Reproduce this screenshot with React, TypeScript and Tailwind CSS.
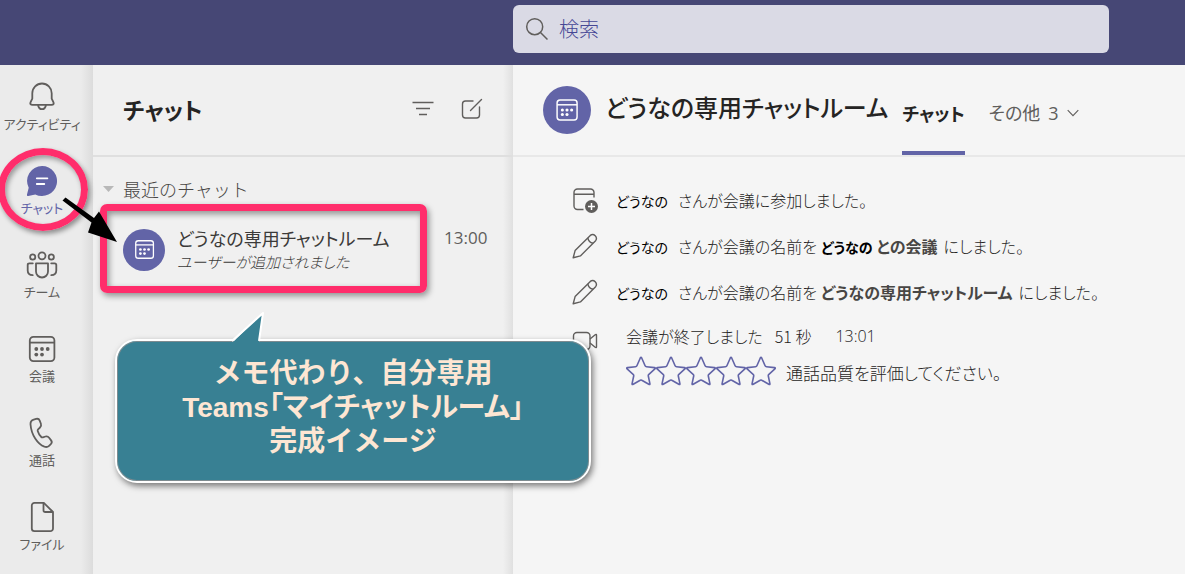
import type { ReactNode } from 'react';

function CalendarIcon({ className }: { className: string }) {
  return (
    <svg viewBox="0 0 32 32" className={className} fill="none" stroke="currentColor" strokeWidth="1.8" aria-hidden="true">
      <rect x="3.8" y="3.8" width="24.6" height="24.4" rx="3.6" />
      <path d="M3.8 9.6h24.6" />
      <g fill="currentColor" stroke="none">
        <circle cx="10.3" cy="16" r="1.9" />
        <circle cx="16" cy="16" r="1.9" />
        <circle cx="21.7" cy="16" r="1.9" />
        <circle cx="10.3" cy="21.6" r="1.9" />
        <circle cx="16" cy="21.6" r="1.9" />
      </g>
    </svg>
  );
}

function BellIcon() {
  return (
    <svg viewBox="0 0 32 32" className="size-8" fill="none" stroke="currentColor" strokeWidth="1.8" strokeLinejoin="round" aria-hidden="true">
      <path d="M6.5 23.8c-2 0-2.6-1-2-2.4l1.8-3.8v-5.4a9.7 9.7 0 0 1 19.4 0v5.4l1.8 3.8c.6 1.4 0 2.4-2 2.4z" />
      <path d="M12 24c.5 2.7 2 4.2 4 4.2s3.500-1.500 4-4.2" />
    </svg>
  );
}

function ChatIcon() {
  return (
    <svg viewBox="0 0 32 32" className="size-8" aria-hidden="true">
      <path fill="currentColor" d="M16 1a15 15 0 1 1-6.7 28.4L2.3 31c-1 .2-1.500-.5-1.300-1.400l1.700-6.800A15 15 0 0 1 16 1z" />
      <path d="M10.8 13.3h10.6M10.8 19h7.5" stroke="#fff" strokeWidth="1.8" strokeLinecap="round" />
    </svg>
  );
}

function TeamIcon() {
  return (
    <svg viewBox="0 0 32 32" className="size-8" fill="none" stroke="currentColor" strokeWidth="1.8" strokeLinecap="round" aria-hidden="true">
      <circle cx="16" cy="6.800" r="3.500" />
      <circle cx="6.700" cy="8" r="2.600" />
      <circle cx="25.300" cy="8" r="2.600" />
      <path d="M10 14.300h12v8.200a6 6 0 0 1-12 0z" strokeLinejoin="round" />
      <path d="M6.800 14.300H3.400c-1.200 0-1.700.6-1.700 1.700v5.500c0 2.800 2 4.600 5 4.700M25.200 14.300h3.400c1.200 0 1.700.6 1.700 1.700v5.500c0 2.800-2 4.600-5 4.700" />
    </svg>
  );
}

function PhoneIcon() {
  return (
    <svg viewBox="0 0 32 32" className="size-8" fill="none" stroke="currentColor" strokeWidth="1.8" strokeLinejoin="round" aria-hidden="true">
      <path d="M7.700 2.600l2.400-.7c1.700-.5 3 .2 3.600 1.700l1.200 3.200c.5 1.400.2 2.700-.9 3.700l-1.900 1.800c-.4.500-.6 1-.4 1.600.7 2.300 1.900 4.400 3.600 6.100.5.500 1 .5 1.600.3l2.600-.8c1.500-.4 2.700 0 3.600 1.200l2 2.700c1 1.300.8 2.700-.3 3.800l-1.700 1.600c-1.300 1.200-3 1.500-4.700.9C11.600 27 5.300 18 4.500 7.200c-.1-2.200 1.200-4 3.200-4.600z" />
    </svg>
  );
}

function FileIcon() {
  return (
    <svg viewBox="0 0 32 32" className="size-8" fill="none" stroke="currentColor" strokeWidth="1.8" strokeLinejoin="round" aria-hidden="true">
      <path d="M8.500 1.800h9.300L27 11v16.500a2.700 2.700 0 0 1-2.700 2.700H8.500a2.700 2.700 0 0 1-2.700-2.700v-23a2.700 2.700 0 0 1 2.700-2.700z" />
      <path d="M17.500 1.800v7.400c0 1.200.6 1.800 1.800 1.800H27" />
    </svg>
  );
}

function PencilIcon() {
  return (
    <svg viewBox="0 0 26 26" className="size-[26px]" fill="none" stroke="currentColor" strokeWidth="1.4" strokeLinejoin="round" aria-hidden="true">
      <path d="M1.200 24.800l1.900-7.200L18.300 2.400a3.800 3.800 0 0 1 5.300 5.300L8.400 22.900z" />
      <path d="M15.800 4.900c.5 3 2.300 4.800 5.300 5.300" />
    </svg>
  );
}

function MeetingAddedIcon() {
  return (
    <svg viewBox="0 0 26 26" className="size-[26px]" fill="none" stroke="currentColor" strokeWidth="1.4" aria-hidden="true">
      <path d="M11.500 22.500H5.500a3.500 3.500 0 0 1-3.500-3.500V5.500A3.500 3.500 0 0 1 5.500 2h13A3.500 3.500 0 0 1 22 5.500V10.500M2 7.300h20" />
      <circle cx="19.500" cy="19.500" r="6.500" fill="currentColor" stroke="none" />
      <path d="M19.500 16v7M16 19.500h7" stroke="#fff" strokeWidth="1.500" />
    </svg>
  );
}

function VideoIcon() {
  return (
    <svg viewBox="0 0 26 26" className="size-[26px]" fill="none" stroke="currentColor" strokeWidth="1.4" strokeLinejoin="round" aria-hidden="true">
      <rect x="1.500" y="4.500" width="16.500" height="17" rx="3.500" />
      <path d="M18 11l5.200-4.300c.8-.6 1.300-.3 1.300.6v11.400c0 .9-.5 1.200-1.300.6L18 15" />
    </svg>
  );
}

const railItems: { label: string; icon: ReactNode; active?: boolean }[] = [
  { label: 'アクティビティ', icon: <BellIcon /> },
  { label: 'チャット', icon: <ChatIcon />, active: true },
  { label: 'チーム', icon: <TeamIcon /> },
  { label: '会議', icon: <CalendarIcon className="size-8" /> },
  { label: '通話', icon: <PhoneIcon /> },
  { label: 'ファイル', icon: <FileIcon /> },
];

function Rail() {
  return (
    <nav className="flex w-[93px] shrink-0 flex-col bg-[linear-gradient(to_right,#ebebeb_calc(100%-12px),#dcdcdc)] pr-[9px]">
      {railItems.map((item) => (
        <button
          key={item.label}
          type="button"
          className={`relative flex h-[84px] flex-col items-center pt-4 text-[13px] leading-[22px] whitespace-nowrap ${item.active ? 'text-[#6264a7]' : 'text-[#605e5c]'}`}
        >
          {item.icon}
          <span>{item.label}</span>
          {item.active && (
            <span className="absolute -top-px -left-[2px] h-[83px] w-[90px] rounded-[50%] border-[7px] border-[#ff2d6b] shadow-[2px_3px_5px_rgba(0,0,0,0.4),inset_2px_3px_5px_rgba(0,0,0,0.35)]" />
          )}
        </button>
      ))}
    </nav>
  );
}

function ChatList() {
  return (
    <section className="w-[420px] shrink-0 bg-[linear-gradient(to_right,#f0f0f0_calc(100%-10px),#e0e0e0)]">
      <header className="flex h-[92px] items-center border-b-2 border-[#dfdfdf] pr-[29px] pb-[2px] pl-[30px]">
        <h1 className="flex-1 text-[23px] leading-8 font-bold text-[#252423]">チャット</h1>
        <button type="button" aria-label="フィルター" className="mr-[25px] text-[#605e5c]">
          <svg viewBox="0 0 24 24" className="size-6" fill="none" stroke="currentColor" strokeWidth="1.500" aria-hidden="true">
            <path d="M1.500 5.500h21M5 11.500h14M8 17.500h8" />
          </svg>
        </button>
        <button type="button" aria-label="新しいチャット" className="text-[#605e5c]">
          <svg viewBox="0 0 24 24" className="size-6" fill="none" stroke="currentColor" strokeWidth="1.400" strokeLinecap="round" aria-hidden="true">
            <path d="M13 4H5.500A3 3 0 0 0 2.500 7v11a3 3 0 0 0 3 3h11a3 3 0 0 0 3-3v-8M10.500 13.500L21.500 2.500" />
          </svg>
        </button>
      </header>
      <h2 className="flex items-center gap-[9px] pt-5 pb-[2px] pl-[10px] text-[18px] leading-6 font-light text-[#484644] [font-feature-settings:normal]">
        <svg viewBox="0 0 11 6" className="h-[6px] w-[11px] fill-[#b8b8b8]" aria-hidden="true">
          <path d="M0 0h11L5.500 6z" />
        </svg>
        最近のチャット
      </h2>
      <a href="#room" className="relative mt-[1px] flex h-[91px] items-center gap-3 pl-[30px] text-[#3b3a39]">
        <span className="flex size-[42px] shrink-0 items-center justify-center rounded-full bg-[#6264a7] text-white">
          <CalendarIcon className="size-[23px]" />
        </span>
        <span className="flex w-[240px] flex-col pb-px">
          <span className="text-[18px] leading-6">どうなの専用チャットルーム</span>
          <span className="text-[15px] leading-[23px] font-light italic">ユーザーが追加されました</span>
        </span>
        <time className="mb-6 ml-[15px] font-['Open_Sans','Noto_Sans_CJK_JP',sans-serif] text-[17px] leading-6 text-[#605e5c]">13:00</time>
        <span className="absolute top-0 left-[7px] h-[89px] w-[327px] rounded-[7px] border-[7px] border-[#ff2d6b] shadow-[2px_3px_6px_rgba(0,0,0,0.4),inset_2px_3px_6px_rgba(0,0,0,0.4)]" />
      </a>
    </section>
  );
}

function EventRow({ icon, children }: { icon: ReactNode; children: ReactNode }) {
  return (
    <li className="flex h-[46px] items-center gap-[18px]">
      <span className="text-[#605e5c]">{icon}</span>
      <p className="flex items-baseline whitespace-nowrap">
        <span className="mr-[10px] text-[14px] font-normal text-black">どうなの</span>
        {children}
      </p>
    </li>
  );
}

function Conversation() {
  return (
    <main className="min-w-0 flex-1 bg-[#f5f5f5]">
      <header className="flex h-[92px] border-b-2 border-[#e8e8e8] pl-[30px]">
        <span className="mt-[21px] flex size-12 shrink-0 items-center justify-center rounded-full bg-[#6264a7] text-white">
          <CalendarIcon className="size-[26px]" />
        </span>
        <h2 className="mt-[25px] ml-[14px] text-[24px] leading-[34px] font-medium whitespace-nowrap text-[#252423]">どうなの専用チャットルーム</h2>
        <nav className="ml-[14px] flex gap-6 text-[18px] leading-6 whitespace-nowrap">
          <a href="#chat" className="border-b-4 border-[#6264a7] pt-9 font-bold text-[#252423]">
            チャット
          </a>
          <button type="button" className="flex items-center gap-2 pt-[5px] text-[#605e5c]">
            <span>
              その他 <span className="ml-1 font-['Open_Sans',sans-serif]">3</span>
            </span>
            <svg viewBox="0 0 12 8" className="h-2 w-3" fill="none" stroke="currentColor" strokeWidth="1.100" aria-hidden="true">
              <path d="M.7 1.200L6 6.600l5.300-5.400" />
            </svg>
          </button>
        </nav>
      </header>
      <ul className="pt-5 pl-[59px] text-[16px] leading-6 font-light text-[#252423]">
        <EventRow icon={<MeetingAddedIcon />}>さんが会議に参加しました。</EventRow>
        <EventRow icon={<PencilIcon />}>
          さんが会議の名前を
          <b className="ml-1 text-[14px] font-bold text-black">どうなの</b>
          <b className="mr-[6px] ml-1 font-bold text-[#484644]">との会議</b>
          にしました。
        </EventRow>
        <EventRow icon={<PencilIcon />}>
          さんが会議の名前を
          <b className="mr-[6px] ml-1 font-bold text-[#484644]">どうなの専用チャットルーム</b>
          にしました。
        </EventRow>
        <li className="flex gap-7 pt-[9px]">
          <span className="pt-1 text-[#605e5c]">
            <VideoIcon />
          </span>
          <div>
            <p className="flex whitespace-nowrap">
              <span>会議が終了しました</span>
              <span className="ml-3">51 秒</span>
              <time className="ml-6 font-['Open_Sans',sans-serif]">13:01</time>
            </p>
            <div className="mt-2 flex items-center whitespace-nowrap">
              {[1, 2, 3, 4, 5].map((n) => (
                <button key={n} type="button" aria-label={`${n} つ星`} className="text-[#6264a7]">
                  <svg viewBox="0 0 30 30" className="size-[30px]" fill="none" stroke="currentColor" strokeWidth="1.600" strokeLinejoin="round" aria-hidden="true">
                    <path d="M14.300 2q.7-1.300 1.400 0l3.400 7.700q.4.900 1.400 1l8 .9q1.400.3.400 1.300l-6 5.400q-.8.700-.6 1.700l1.600 7.600q.2 1.400-1.100.7l-7-4q-.8-.5-1.600 0l-7 4q-1.300.7-1.100-.7l1.600-7.600q.2-1-.6-1.700l-6-5.400q-1-1 .4-1.300l8-.9q1-.1 1.400-1z" />
                  </svg>
                </button>
              ))}
              <span className="ml-[10px] pt-1 text-[17px]">通話品質を評価してください。</span>
            </div>
          </div>
        </li>
      </ul>
    </main>
  );
}

function Callout() {
  return (
    <aside className="absolute top-[339px] left-[115px] h-[144px] w-[476px] rounded-[22px] border-2 border-white bg-[#388093] pt-4 text-center font-['Liberation_Sans','Noto_Sans_CJK_JP',sans-serif] text-[28px] leading-[34px] font-bold text-[#fde6d3] shadow-[2px_3px_6px_rgba(0,0,0,0.5),inset_0_0_0_1px_#7d8b90]">
      <svg viewBox="0 0 34 32" className="absolute -top-[30px] left-[115px] h-8 w-[34px] overflow-visible" aria-hidden="true">
        <path d="M1 31L31 2L27 31V32H1z" fill="#388093" />
        <path d="M0 30L31 2L27 30" fill="none" stroke="#fff" strokeWidth="2" strokeLinejoin="round" />
      </svg>
      <p className="[font-feature-settings:normal]">メモ代わり、自分専用</p>
      <p>Teams「マイチャットルーム」</p>
      <p className="[font-feature-settings:normal]">完成イメージ</p>
    </aside>
  );
}

export default function App() {
  return (
    <div className="relative flex min-h-screen flex-col overflow-hidden font-['Noto_Sans_CJK_JP',sans-serif] [font-feature-settings:'palt']">
      <header className="flex h-[65px] bg-[#464775] pt-[5px] pr-[76px] pl-[513px]">
        <label className="flex h-12 flex-1 items-center gap-[10px] rounded-[6px] bg-[#dadae5] pl-3">
          <svg viewBox="0 0 24 24" className="size-6 text-[#605e5c]" fill="none" stroke="currentColor" strokeWidth="1.500" aria-hidden="true">
            <circle cx="9.700" cy="9.700" r="8" />
            <path d="M15.500 15.500l7 7" />
          </svg>
          <input
            type="search"
            aria-label="検索"
            placeholder="検索"
            className="min-w-0 flex-1 bg-transparent text-[20px] font-light outline-none placeholder:text-[#464795]"
          />
        </label>
      </header>
      <div className="flex flex-1">
        <Rail />
        <ChatList />
        <Conversation />
      </div>
      <svg viewBox="0 0 56 46" className="absolute top-[197px] left-[62px] h-[46px] w-14" aria-hidden="true">
        <path d="M0.500 3.500L3.500 0.500L32 21L37 14.500L55 45L26 35.500L29.500 25.500z" fill="#000" />
      </svg>
      <Callout />
    </div>
  );
}
